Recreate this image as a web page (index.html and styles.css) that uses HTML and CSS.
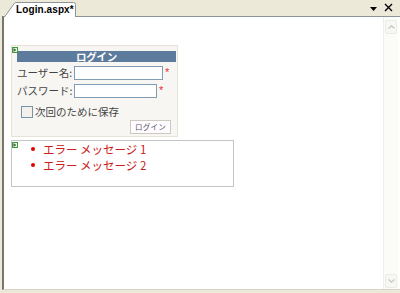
FILE: index.html
```html
<!DOCTYPE html>
<html lang="ja">
<head>
<meta charset="utf-8">
<title>Login.aspx</title>
<link rel="stylesheet" href="styles.css">
</head>
<body>
<div class="win">
  <div class="tabbar">
    <div class="tab">
      <svg class="tab-shape" width="72" height="15" viewBox="0 0 72 15"><path d="M0.5 15 L10 1.8 Q10.6 0.5 12 0.5 L69.5 0.5 Q71.5 0.5 71.5 2.5 L71.5 15" fill="#ffffff" stroke="#8c949a"/></svg>
      <span class="tab-label">Login.aspx*</span>
    </div>
    <div class="tab-tools">
      <svg class="tool-drop" width="7" height="4" viewBox="0 0 7 4"><path d="M0 0 H7 L3.5 4 Z" fill="#000"/></svg>
      <svg class="tool-close" width="9" height="9" viewBox="0 0 9 9"><path d="M1 1 L8 8 M8 1 L1 8" stroke="#000" stroke-width="1.4"/></svg>
    </div>
  </div>
  <div class="frame">
    <div class="surface">
      <div class="login">
        <span class="tag"><svg width="6" height="6" viewBox="0 0 6 6"><rect x="0.5" y="0.5" width="5" height="5" fill="#eaf6e4" stroke="#3f9a3f"/><path d="M2 1.5 V4.5 M2 3 H4" stroke="#1d3d1d"/></svg></span>
        <div class="login-title">ログイン</div>
        <div class="login-grid">
          <label class="lbl">ユーザー名:</label>
          <div class="field"><span class="tb tb-user"></span><span class="req">*</span></div>
          <label class="lbl">パスワード:</label>
          <div class="field"><span class="tb tb-pass"></span><span class="req">*</span></div>
        </div>
        <div class="remember"><span class="cb"></span><span>次回のために保存</span></div>
        <div class="actions"><span class="btn">ログイン</span></div>
      </div>
      <div class="errors">
        <span class="tag"><svg width="6" height="6" viewBox="0 0 6 6"><rect x="0.5" y="0.5" width="5" height="5" fill="#eaf6e4" stroke="#3f9a3f"/><path d="M2 1.5 V4.5 M2 3 H4" stroke="#1d3d1d"/></svg></span>
        <ul class="err-list">
          <li>エラー メッセージ 1</li>
          <li>エラー メッセージ 2</li>
        </ul>
      </div>
    </div>
    <div class="vscroll">
      <div class="sb-btn"><svg width="7" height="4" viewBox="0 0 7 4"><path d="M0.5 3.5 L3.5 0.8 L6.5 3.5" fill="none" stroke="#c9c9c2" stroke-width="1.3"/></svg></div>
      <div class="sb-track"></div>
      <div class="sb-btn"><svg width="7" height="4" viewBox="0 0 7 4"><path d="M0.5 0.5 L3.5 3.2 L6.5 0.5" fill="none" stroke="#c9c9c2" stroke-width="1.3"/></svg></div>
    </div>
  </div>
</div>
</body>
</html>
```

FILE: styles.css
```css
* { box-sizing: border-box; }
html, body {
  margin: 0;
  padding: 0;
}
body {
  width: 400px;
  height: 293px;
  overflow: hidden;
  background: #ece9d8;
  font-family: "Noto Sans CJK JP", "Noto Sans", sans-serif;
}
.win {
  display: flex;
  flex-direction: column;
  height: 293px;
}
.tabbar {
  height: 16px;
  display: flex;
  align-items: flex-end;
  justify-content: space-between;
  padding-left: 4px;
  position: relative;
  z-index: 2;
}
.tab {
  position: relative;
  width: 72px;
  height: 15px;
  margin-bottom: -1px;
  padding-left: 12px;
  display: flex;
  align-items: center;
}
.tab-shape {
  position: absolute;
  left: 0;
  top: 0;
}
.tab-label {
  position: relative;
  font-family: "Liberation Sans", Arial, sans-serif;
  font-weight: bold;
  font-size: 10px;
  line-height: 13px;
  color: #000;
  letter-spacing: 0.1px;
}
.tab-tools {
  display: flex;
  align-items: center;
  gap: 7px;
  height: 16px;
  padding-right: 7px;
  padding-bottom: 1px;
}
.tool-drop { margin-top: 3px; }

.frame {
  height: 274px;
  display: flex;
  margin-left: 2px;
  border-left: 2px solid #77776f;
  border-top: 1px solid #8c949a;
  border-bottom: 1px solid #d6d3c6;
  background: #ffffff;
}
.surface {
  flex: 1;
  padding: 28px 0 0 7px;
}
.vscroll {
  width: 15px;
  margin-right: 2px;
  display: flex;
  flex-direction: column;
  background: #fbfbf8;
  border-left: 1px solid #efefe9;
  padding-top: 3px;
  padding-bottom: 1px;
}
.sb-btn {
  height: 14px;
  margin: 0 1px 0 1px;
  border: 1px solid #ecece6;
  border-radius: 2px;
  background: #f7f7f3;
  display: flex;
  align-items: center;
  justify-content: center;
}
.sb-track { flex: 1; }

.login {
  position: relative;
  width: 167px;
  height: 92px;
  border: 1px solid #e6e2d8;
  background: #f7f6f3;
  padding: 5px 1px 0 5px;
}
.tag {
  position: absolute;
  left: 0;
  top: 0;
  width: 6px;
  height: 6px;
  display: block;
  line-height: 0;
}
.login-title {
  height: 11px;
  background: #5d7b9d;
  color: #ffffff;
  font-weight: bold;
  font-size: 10.5px;
  line-height: 11px;
  text-align: center;
  letter-spacing: -0.3px;
}
.login-grid {
  margin-top: 4px;
  display: grid;
  grid-template-columns: 55px auto;
  column-gap: 2px;
  row-gap: 4px;
  grid-auto-rows: 14px;
}
.lbl {
  font-size: 10.5px;
  line-height: 14px;
  color: #444444;
  text-align: right;
  white-space: nowrap;
}
.field {
  display: flex;
  align-items: flex-start;
}
.tb {
  height: 14px;
  border: 1px solid #7f9db9;
  background: #ffffff;
  display: block;
}
.tb-user { width: 89px; }
.tb-pass { width: 83px; }
.req {
  margin-left: 2px;
  color: #e03030;
  font-family: "Liberation Sans", Arial, sans-serif;
  font-size: 11px;
  line-height: 11px;
  margin-top: 1px;
}
.remember {
  margin-top: 7px;
  height: 13px;
  display: flex;
  align-items: center;
  padding-left: 4px;
  font-size: 10.5px;
  line-height: 13px;
  color: #444444;
}
.cb {
  width: 12px;
  height: 12px;
  border: 1px solid #7a93ad;
  background: #f2f1ec;
  margin-right: 2px;
}
.actions {
  margin-top: 2px;
  display: flex;
  justify-content: flex-end;
  padding-right: 5px;
}
.btn {
  width: 41px;
  height: 14px;
  border: 1px solid #ccc9c0;
  background: #fffbff;
  color: #505868;
  font-size: 7.5px;
  line-height: 12px;
  text-align: center;
  letter-spacing: 0.3px;
}

.errors {
  position: relative;
  margin-top: 3px;
  width: 223px;
  height: 47px;
  border: 1px solid #c4c4c4;
}
.err-list {
  margin: 0;
  padding: 0 0 0 19px;
  list-style: none;
}
.err-list li {
  display: flex;
  align-items: center;
  height: 16px;
  font-size: 11.5px;
  line-height: 16px;
  color: #c82020;
  white-space: pre;
}
.err-list li::before {
  content: "";
  width: 4px;
  height: 4px;
  border-radius: 50%;
  background: #e00000;
  margin-right: 8px;
  margin-top: -1px;
}
```
